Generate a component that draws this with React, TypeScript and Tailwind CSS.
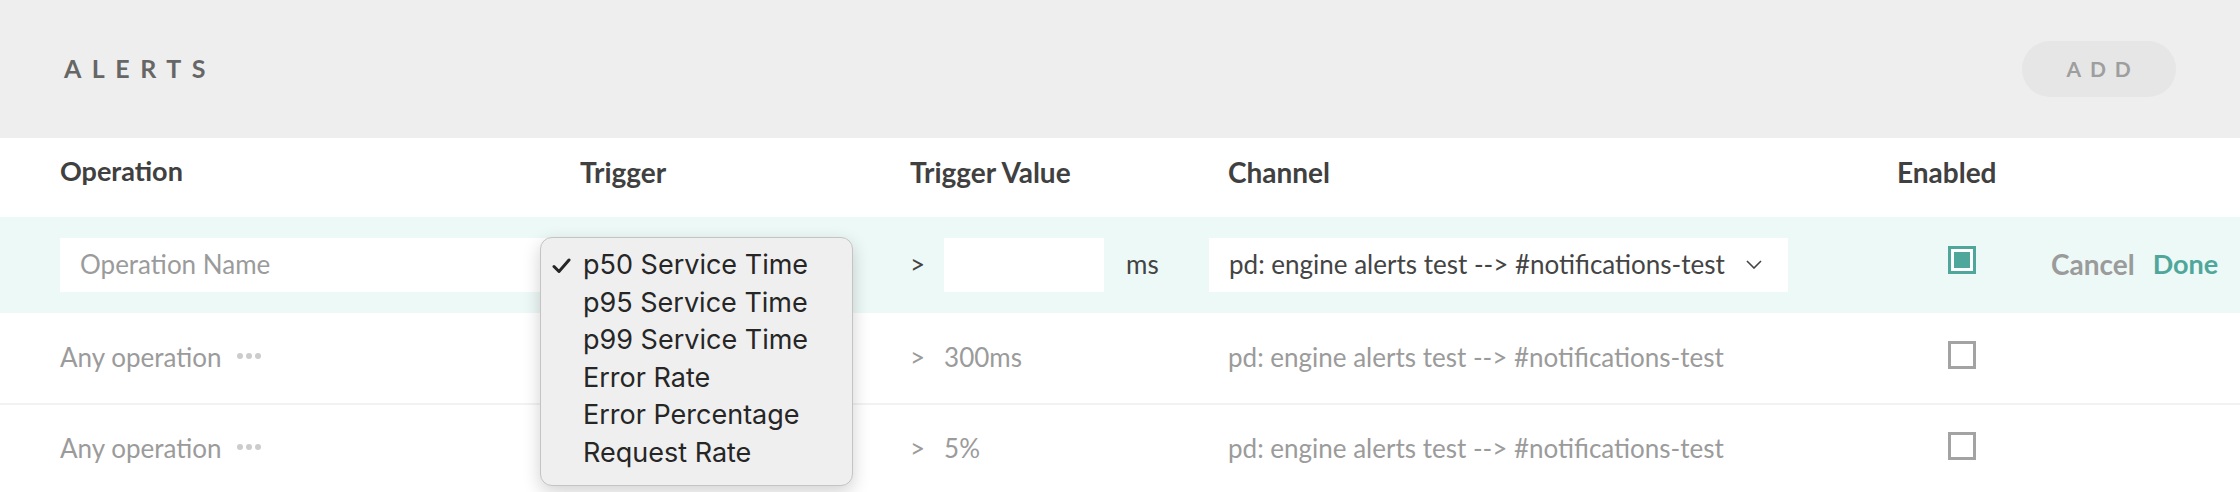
import React from "react";

const options = [
  "p50 Service Time",
  "p95 Service Time",
  "p99 Service Time",
  "Error Rate",
  "Error Percentage",
  "Request Rate",
];

function Dots() {
  return (
    <span className="mb-[4px] ml-[16px] flex items-center gap-[3px]">
      <span className="h-[6px] w-[6px] rounded-full bg-[#cccccc]" />
      <span className="h-[6px] w-[6px] rounded-full bg-[#cccccc]" />
      <span className="h-[6px] w-[6px] rounded-full bg-[#cccccc]" />
    </span>
  );
}

function Checkbox({ checked }: { checked: boolean }) {
  return checked ? (
    <div className="mb-[10px] ml-[51px] h-[28px] w-[28px] border-[3px] border-[#4fa79b] bg-white p-[3px]">
      <div className="h-full w-full bg-[#4fa79b]" />
    </div>
  ) : (
    <div className="mb-[6px] ml-[51px] h-[28px] w-[28px] border-[3px] border-[#a3a3a3] bg-white" />
  );
}

function Dropdown() {
  return (
    <div className="absolute left-[-40px] top-[20px] z-10 w-[313px] rounded-[12px] border border-[#c4c4c4] bg-[#efefef] pb-[14px] pt-[8px] shadow-[0_6px_18px_rgba(0,0,0,0.18)] font-[family-name:Inter,sans-serif] text-[27px] leading-[37.5px] text-[#262626]">
      {options.map((o, i) => (
        <div key={o} className="relative pl-[42px]">
          {i === 0 && (
            <svg
              className="absolute left-[11px] top-[12px]"
              width="19"
              height="16"
              viewBox="0 0 19 16"
              fill="none"
            >
              <path d="M2 8.5 L7 13.5 L17 2" stroke="#262626" strokeWidth="3" strokeLinecap="round" strokeLinejoin="round" />
            </svg>
          )}
          {o}
        </div>
      ))}
    </div>
  );
}

function Chevron() {
  return (
    <svg width="16" height="9" viewBox="0 0 16 9" fill="none">
      <path d="M1 1 L8 8 L15 1" stroke="#444444" strokeWidth="1.6" />
    </svg>
  );
}

export default function App() {
  return (
    <div className="h-[492px] w-[2240px] overflow-hidden bg-white font-[family-name:Lato,sans-serif]">
      <header className="flex h-[138px] items-center justify-between bg-[#eeeeee] pl-[64px] pr-[64px]">
        <h1 className="text-[25px] font-bold tracking-[0.42em] text-[#666666]">ALERTS</h1>
        <button className="flex h-[56px] w-[154px] items-center justify-center rounded-full bg-[#e6e6e6] pl-[8px] text-[21px] font-bold tracking-[0.42em] text-[#9e9e9e]">
          ADD
        </button>
      </header>

      <div className="flex h-[79px] items-center pb-[12px] pl-[60px] text-[28px] font-bold text-[#404040]">
        <div className="w-[520px] text-[27px]">Operation</div>
        <div className="w-[330px]">Trigger</div>
        <div className="w-[318px]">Trigger Value</div>
        <div className="w-[669px]">Channel</div>
        <div className="w-[154px]">Enabled</div>
        <div />
      </div>

      <div className="flex h-[96px] items-center bg-[#edf9f7] pl-[60px] text-[26px]">
        <div className="w-[520px]">
          <div className="flex h-[54px] w-[500px] items-center bg-white pb-[2px] pl-[20px] text-[#9b9b9b]">
            Operation Name
          </div>
        </div>
        <div className="relative w-[330px] self-stretch">
          <Dropdown />
        </div>
        <div className="flex w-[318px] items-center text-[#444444]">
          <span className="pb-[2px]">&gt;</span>
          <div className="ml-[19px] h-[54px] w-[160px] bg-white" />
          <span className="ml-[22px] pb-[2px]">ms</span>
        </div>
        <div className="w-[669px]">
          <div className="ml-[-19px] flex h-[54px] w-[579px] items-center justify-between bg-white pb-[2px] pl-[20px] pr-[26px] text-[#444444]">
            <span className="whitespace-nowrap">pd: engine alerts test --&gt; #notifications-test</span>
            <Chevron />
          </div>
        </div>
        <div className="w-[154px]">
          <Checkbox checked />
        </div>
        <div className="flex items-center gap-[18px] pb-[2px] text-[28px] font-bold">
          <span className="text-[#9b9b9b]">Cancel</span>
          <span className="text-[27px] text-[#4fa79b]">Done</span>
        </div>
      </div>

      {[{ v: "300ms" }, { v: "5%" }].map((r, i) => (
        <div
          key={i}
          className={
            i === 0
              ? "flex h-[90px] items-center pb-[1px] pl-[60px] text-[26px] text-[#9b9b9b]"
              : "flex h-[90px] items-center border-t-2 border-[#f2f2f2] pb-[1px] pl-[60px] text-[26px] text-[#9b9b9b]"
          }
        >
          <div className="flex w-[520px] items-center">
            <span>Any operation</span>
            <Dots />
          </div>
          <div className="w-[330px]" />
          <div className="flex w-[318px] items-center">
            <span>&gt;</span>
            <span className="ml-[19px]">{r.v}</span>
          </div>
          <div className="w-[669px] whitespace-nowrap">pd: engine alerts test --&gt; #notifications-test</div>
          <div className="w-[154px]">
            <Checkbox checked={false} />
          </div>
        </div>
      ))}
    </div>
  );
}
